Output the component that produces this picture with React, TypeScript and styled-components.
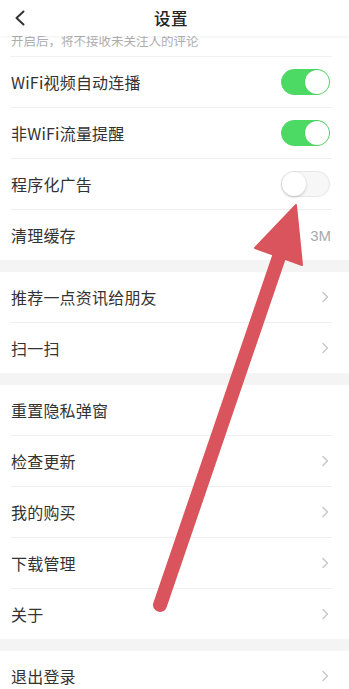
import React from "react";
import styled, { createGlobalStyle } from "styled-components";

const Global = createGlobalStyle`
  html, body { margin: 0; padding: 0; background: #fff; overflow: hidden; }
  body { font-family: "Noto Sans CJK SC", "Noto Sans", sans-serif; -webkit-font-smoothing: antialiased; }
  * { box-sizing: border-box; }
`;

const Page = styled.div`
  position: relative;
  width: 349px;
  height: 689px;
  overflow: hidden;
  background: #fff;
  display: flex;
  flex-direction: column;
`;

const Header = styled.div`
  position: relative;
  z-index: 2;
  height: 36px;
  flex: none;
  display: grid;
  grid-template-columns: 40px 1fr 40px;
  align-items: center;
  padding: 0 17px 0 10px;
  background: rgba(255, 255, 255, 0.96);
  box-shadow: 0 1px 3px rgba(0, 0, 0, 0.06);
`;

const Back = styled.div`
  display: flex;
  align-items: center;
  padding-left: 4px;
  height: 100%;
`;

const Title = styled.div`
  text-align: center;
  font-size: 16.5px;
  font-weight: 500;
  color: #222;
  letter-spacing: 0.5px;
`;

const Group = styled.div`
  background: #fff;
`;

const Band = styled.div`
  height: 12px;
  background: #f4f4f4;
  flex: none;
`;

const ClippedRow = styled.div`
  height: 21px;
  margin: 0 17px 0 10px;
  border-bottom: 1px solid #eeeeee;
  display: flex;
  align-items: flex-end;
  padding: 0 0 9px 1px;
  overflow: hidden;
  font-size: 12.5px;
  line-height: 13px;
  color: #9a9a9a;
  opacity: 0.8;
`;

const Row = styled.div<{ $last?: boolean }>`
  height: ${(p) => (p.$last ? 50 : 51)}px;
  margin: 0 17px 0 10px;
  padding: 0 1px 0 1px;
  display: flex;
  align-items: center;
  justify-content: space-between;
  border-bottom: ${(p) => (p.$last ? "none" : "1px solid #efefef")};
`;

const Label = styled.span`
  font-size: 16px;
  color: #333;
  letter-spacing: 0.2px;
`;

const Value = styled.span`
  font-family: "Liberation Sans", Arial, sans-serif;
  font-size: 15px;
  color: #aaa;
`;

const Track = styled.div<{ $on: boolean }>`
  position: relative;
  width: 49px;
  height: 26px;
  border-radius: 13px;
  background: ${(p) => (p.$on ? "#4cd964" : "#f7f7f7")};
  border: 1px solid ${(p) => (p.$on ? "#4cd964" : "#e6e6e6")};
  margin-right: 1px;
`;

const Knob = styled.div<{ $on: boolean }>`
  position: absolute;
  top: 0;
  ${(p) => (p.$on ? "right: 0;" : "left: 0;")}
  width: 24px;
  height: 24px;
  border-radius: 50%;
  background: #fff;
  box-shadow: ${(p) =>
    p.$on ? "0 0 0 0.5px rgba(0,0,0,0.08)" : "0 1px 3px rgba(0,0,0,0.22)"};
`;

const Overlay = styled.svg`
  position: absolute;
  left: 0;
  top: 0;
  pointer-events: none;
  z-index: 3;
`;

const Switch = ({ on }: { on: boolean }) => (
  <Track $on={on}>
    <Knob $on={on} />
  </Track>
);

const Chevron = () => (
  <svg width="9" height="12" viewBox="0 0 9 12" style={{ marginRight: 1 }}>
    <path d="M2 1.5 L6.5 6 L2 10.5" fill="none" stroke="#c8c8c8" strokeWidth="1.5" strokeLinecap="round" strokeLinejoin="round" />
  </svg>
);

type Item = { label: string; right?: "on" | "off" | "chev" | "none" | string };

const renderGroup = (items: Item[]) =>
  items.map((it, i) => (
    <Row key={it.label} $last={i === items.length - 1}>
      <Label>{it.label}</Label>
      {it.right === "on" && <Switch on />}
      {it.right === "off" && <Switch on={false} />}
      {it.right === "chev" && <Chevron />}
      {it.right && !["on", "off", "chev", "none"].includes(it.right) && <Value>{it.right}</Value>}
    </Row>
  ));

export default function App() {
  return (
    <>
      <Global />
      <Page>
        <Header>
          <Back>
            <svg width="12" height="16" viewBox="0 0 12 16">
              <path d="M9.5 1.5 L2.5 8 L9.5 14.5" fill="none" stroke="#333" strokeWidth="2" strokeLinecap="round" strokeLinejoin="round" />
            </svg>
          </Back>
          <Title>设置</Title>
          <div />
        </Header>
        <Group>
          <ClippedRow>开启后，将不接收未关注人的评论</ClippedRow>
          {renderGroup([
            { label: "WiFi视频自动连播", right: "on" },
            { label: "非WiFi流量提醒", right: "on" },
            { label: "程序化广告", right: "off" },
            { label: "清理缓存", right: "3M" },
          ])}
        </Group>
        <Band />
        <Group>
          {renderGroup([
            { label: "推荐一点资讯给朋友", right: "chev" },
            { label: "扫一扫", right: "chev" },
          ])}
        </Group>
        <Band />
        <Group>
          {renderGroup([
            { label: "重置隐私弹窗", right: "none" },
            { label: "检查更新", right: "chev" },
            { label: "我的购买", right: "chev" },
            { label: "下载管理", right: "chev" },
            { label: "关于", right: "chev" },
          ])}
        </Group>
        <Band />
        <Group>{renderGroup([{ label: "退出登录", right: "chev" }])}</Group>
        <Overlay width="349" height="689" viewBox="0 0 349 689">
          <line x1="160" y1="605" x2="280" y2="254" stroke="#d9545c" strokeWidth="14" strokeLinecap="round" />
          <polygon points="296,205 255,248 302,265" fill="#d9545c" stroke="#d9545c" strokeWidth="2" strokeLinejoin="round" />
        </Overlay>
      </Page>
    </>
  );
}
